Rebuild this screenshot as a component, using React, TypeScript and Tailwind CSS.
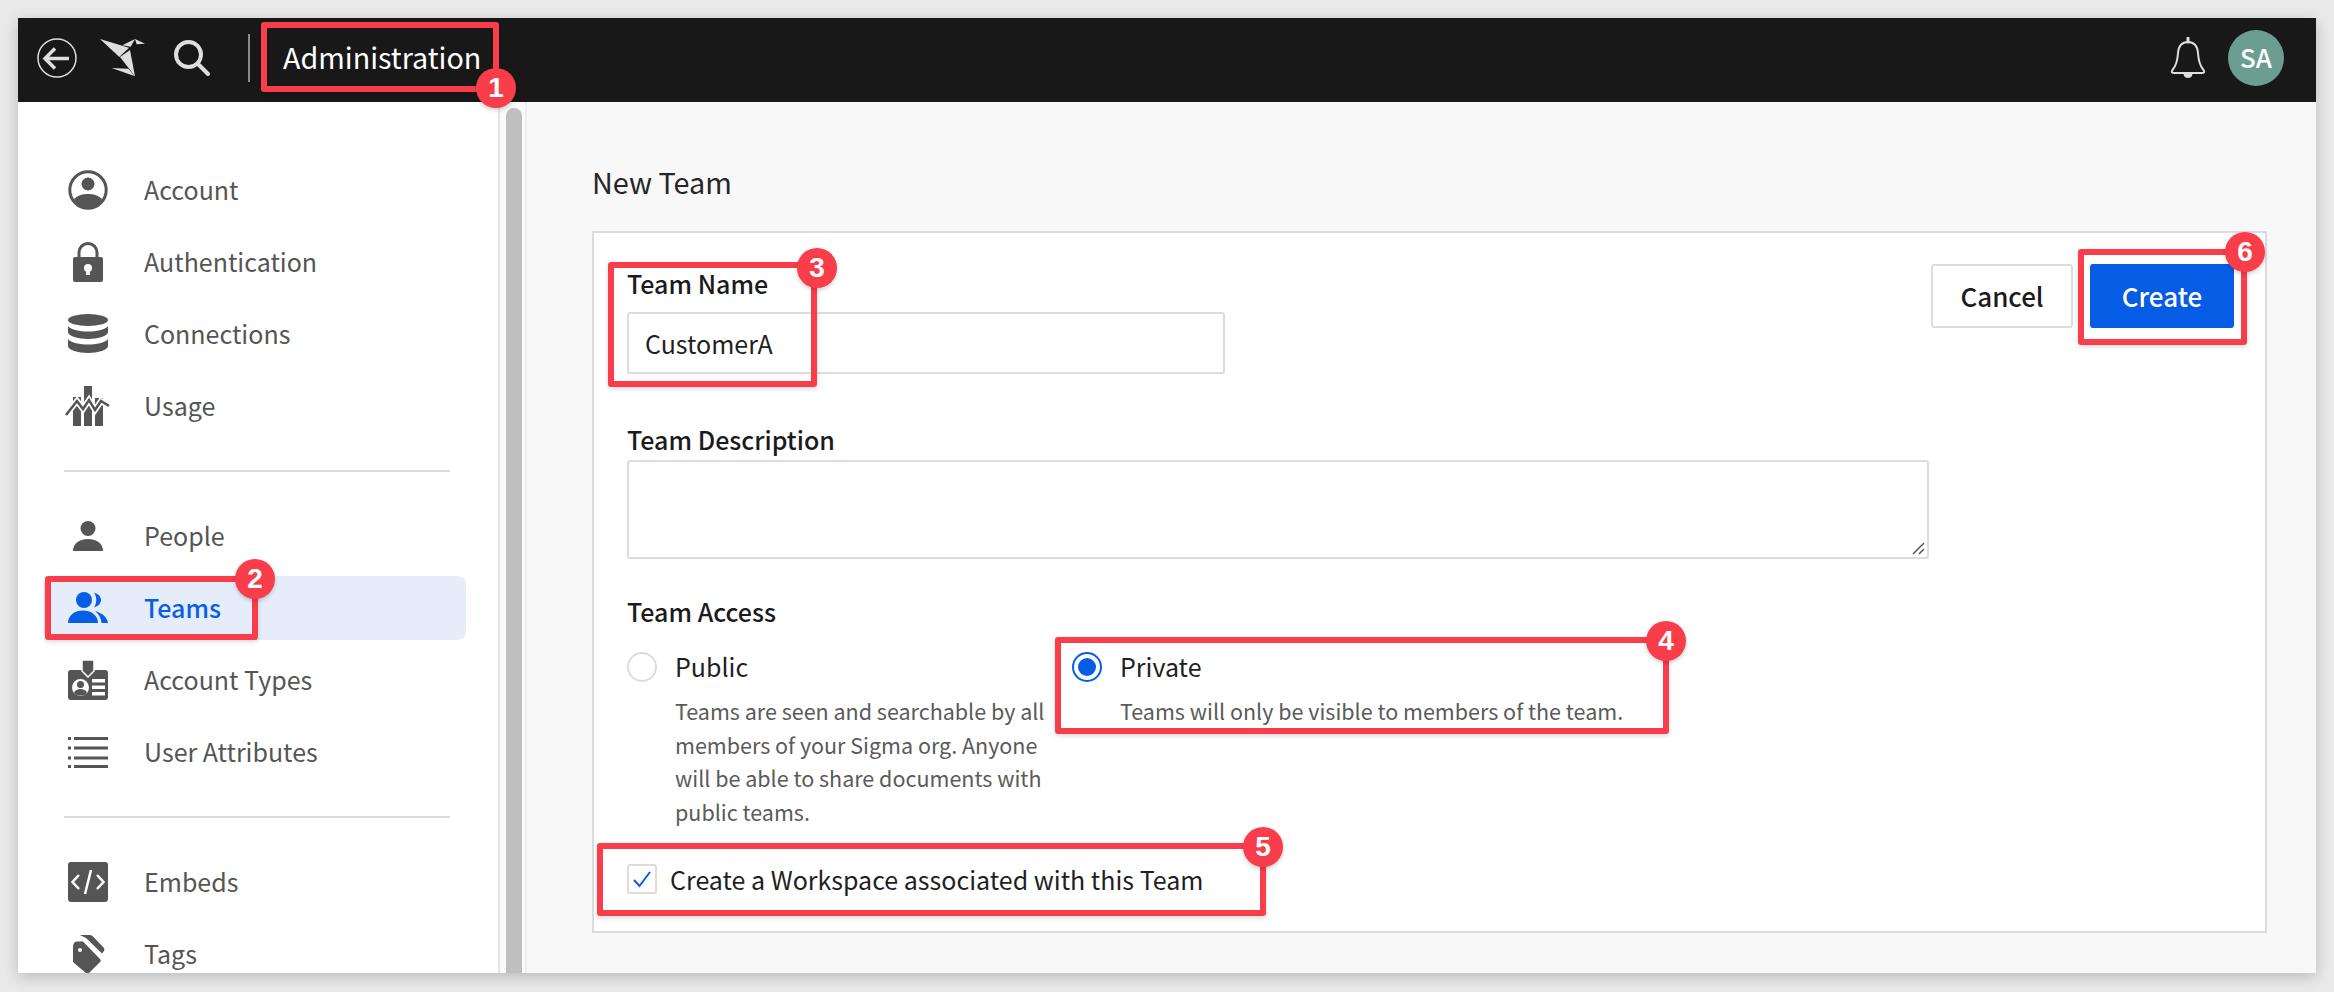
import React from "react";

const sans = { fontFamily: '"Noto Sans CJK SC", "Noto Sans", sans-serif' };

function Ico({ children }: { children: React.ReactNode }) {
  return (
    <svg width="40" height="40" viewBox="0 0 40 40" className="shrink-0 overflow-visible" fill="currentColor">
      {children}
    </svg>
  );
}

const icons: Record<string, React.ReactNode> = {
  Account: (
    <Ico>
      <circle cx="20" cy="20" r="18.2" fill="none" stroke="currentColor" strokeWidth="3" />
      <circle cx="20" cy="14" r="6.5" />
      <path d="M6 29C10 25 15 24 20 24C25 24 30 25 34 29C31 35 26 37 20 37C14 37 9 35 6 29Z" />
    </Ico>
  ),
  Authentication: (
    <Ico>
      <path d="M11 16V10.5a9 9 0 0 1 18 0V16" fill="none" stroke="currentColor" strokeWidth="3" />
      <rect x="5" y="15" width="30" height="25" rx="2" />
      <circle cx="20" cy="26" r="4" fill="#fff" />
      <path d="M18.5 27h3l.5 6h-4z" fill="#fff" />
    </Ico>
  ),
  Connections: (
    <Ico>
      <ellipse cx="20" cy="6" rx="20" ry="6" />
      <path d="M0 12C3 16 12 17.500 20 17.500C28 17.500 37 16 40 12V18C40 22 30 25 20 25C10 25 0 22 0 18Z" />
      <path d="M0 25C3 29 12 30.500 20 30.500C28 30.500 37 29 40 25V32C40 36 30 39 20 39C10 39 0 36 0 32Z" />
    </Ico>
  ),
  Usage: (
    <Ico>
      <rect x="5" y="11" width="8" height="29" />
      <rect x="16" y="0" width="8" height="40" />
      <rect x="27" y="12" width="8" height="28" />
      <path d="M-2 29L9 15L15 23L21 14L27 24L33 15L41 20" fill="none" stroke="#fff" strokeWidth="6" />
      <path d="M-2 29L9 15L15 23L21 14L27 24L33 15L41 20" fill="none" stroke="currentColor" strokeWidth="2.500" />
    </Ico>
  ),
  People: (
    <Ico>
      <circle cx="20" cy="12.500" r="7.500" />
      <path d="M5 35C5 27 12 23 20 23C28 23 35 27 35 35Z" />
    </Ico>
  ),
  Teams: (
    <Ico>
      <circle cx="16" cy="12" r="8" />
      <path d="M26 4.500C31 6 33 9 33 12C33 15 31 18 26 19.500C29 15 29 9 26 4.500Z" />
      <path d="M0 35C0 27 7 22.500 15 22.500C24 22.500 30 28 30 35Z" />
      <path d="M27 23C34 25 39 29 40 35H33.500C33 30 31 26 27 23Z" />
    </Ico>
  ),
  "Account Types": (
    <Ico>
      <rect x="0" y="10" width="40" height="30" rx="3" />
      <path d="M14 0H26V11L20 17L14 11Z" stroke="#fff" strokeWidth="1.500" />
      <circle cx="12.500" cy="27.500" r="8.500" fill="#fff" />
      <circle cx="12.500" cy="24.500" r="3.500" />
      <path d="M6 33C7 30 9.500 29 12.500 29C15.500 29 18 30 19 33C17 35 15 35.500 12.500 35.500C10 35.500 8 35 6 33Z" />
      <rect x="24" y="19" width="13" height="3.500" fill="#fff" />
      <rect x="24" y="25.500" width="13" height="3.500" fill="#fff" />
      <rect x="24" y="32" width="13" height="3.500" fill="#fff" />
    </Ico>
  ),
  "User Attributes": (
    <Ico>
      {[5, 14.500, 24.500, 33].map((y) => (
        <g key={y}>
          <rect x="0" y={y} width="3" height="3" />
          <rect x="6" y={y} width="34" height="3" />
        </g>
      ))}
    </Ico>
  ),
  Embeds: (
    <Ico>
      <rect x="0" y="0" width="40" height="40" rx="3" />
      <path d="M11 13L4.500 20L11 27M29 13L35.500 20L29 27M23 8L17 32" fill="none" stroke="#fff" strokeWidth="2.500" />
    </Ico>
  ),
  Tags: (
    <Ico>
      <path d="M5 12C5 9.500 7 7.500 9 7.500H15L32 25C33 26 33 27 32 28L21 39C20 40 19 40 18 39L6 29C5.500 28.500 5 28 5 27Z" />
      <circle cx="12" cy="16" r="2" fill="#fff" />
      <path d="M12 1H22C23 1 24 1.500 25 2.500L36 14C36.500 15 36.500 16 36 17L34 19.500L18 4Z" />
    </Ico>
  ),
};

function NavRow({ label, active }: { label: string; active?: boolean }) {
  return (
    <div
      className={
        "flex h-[64px] shrink-0 items-center rounded-lg pl-[24px] " +
        (active ? "bg-[#e6edfa] font-medium text-[#075fe6]" : "text-[#555555]")
      }
    >
      {icons[label]}
      <span className="ml-[36px] pb-[3px] text-[25px] leading-[32px]">{label}</span>
    </div>
  );
}

function Divider() {
  return <div className="my-[24px] ml-[20px] h-[2px] w-[386px] shrink-0 bg-[#dcdcdc]" />;
}

function Sidebar() {
  return (
    <div className="flex w-[480px] shrink-0 flex-col gap-[8px] overflow-hidden bg-white pl-[26px] pr-[32px] pt-[56px]">
      <NavRow label="Account" />
      <NavRow label="Authentication" />
      <NavRow label="Connections" />
      <NavRow label="Usage" />
      <Divider />
      <NavRow label="People" />
      <NavRow label="Teams" active />
      <NavRow label="Account Types" />
      <NavRow label="User Attributes" />
      <Divider />
      <NavRow label="Embeds" />
      <NavRow label="Tags" />
    </div>
  );
}

function Header() {
  return (
    <div className="flex h-[84px] shrink-0 items-center bg-[#181818] pb-[4px] text-[#dedede]">
      <svg width="40" height="40" viewBox="0 0 40 40" className="ml-[19px]" fill="none" stroke="currentColor">
        <circle cx="20" cy="20" r="19" strokeWidth="1.500" />
        <path d="M32 20.500H8.500M18 10.500L8 20.500L18 30.500" strokeWidth="3.500" />
      </svg>
      <svg width="45" height="40" viewBox="0 0 135 120" className="ml-[23px]" fill="currentColor">
        <path d="M0 3L87 29L58 57Z" />
        <path d="M67 22L105 3L92 26Z" />
        <path d="M105 3L135 17L110 19Z" />
        <path d="M90 36L105 115L60 57Z" />
        <path d="M35 90L85 92L105 115Z" />
      </svg>
      <svg width="38" height="38" viewBox="0 0 38 38" className="ml-[28px]" fill="none" stroke="currentColor" strokeWidth="4">
        <circle cx="15.500" cy="15.500" r="12.500" />
        <path d="M24.500 24.500L35 35" strokeLinecap="round" />
      </svg>
      <div className="ml-[37px] h-[48px] w-[2px] bg-[#8a8a8a]" />
      <span className="ml-[33px] pb-[2px] text-[28.700px] leading-[40px] text-white">Administration</span>
      <svg width="36" height="42" viewBox="0 0 36 42" className="ml-auto" fill="none" stroke="currentColor" strokeWidth="2">
        <path d="M18 5C11 5 8.500 10 8 16C7.500 24 6 29 2.500 33C1 35 2 36 4 36H32C34 36 35 35 33.500 33C30 29 28.500 24 28 16C27.500 10 25 5 18 5Z" />
        <path d="M18 1V5" strokeWidth="3" strokeLinecap="round" />
        <path d="M14.500 37C15 41 21 41 21.500 37Z" fill="currentColor" />
      </svg>
      <div className="ml-[22px] mr-[32px] flex h-[56px] w-[56px] items-center justify-center rounded-full bg-[#6b9e90] pb-[2px] text-[26px] font-medium leading-none text-white">
        SA
      </div>
    </div>
  );
}

function FieldLabel({ children }: { children: React.ReactNode }) {
  return <div className="pb-[2px] text-[25px] font-medium leading-[30px] text-[#1b1b1b]">{children}</div>;
}

function Form() {
  return (
    <div className="flex-1 bg-[#f8f8f8] pl-[65px] pr-[49px] pt-[63px]">
      <div className="pb-[2px] text-[28.800px] leading-[34px] text-[#262626]">New Team</div>
      <div className="mt-[30px] h-[702px] border-2 border-[#dcdcdc] bg-white pl-[33px] pr-[31px] pt-[31px]">
        <div className="flex items-start justify-between">
          <div className="mt-[4px]">
            <FieldLabel>Team Name</FieldLabel>
            <div className="mt-[12px] flex h-[62px] w-[598px] items-center rounded-[3px] border-2 border-[#dcdcdc] bg-white pl-[16px] text-[25px] leading-[32px] text-[#1f1f1f]">
              CustomerA
            </div>
          </div>
          <div className="flex gap-[17px]">
            <div className="flex h-[64px] w-[142px] items-center justify-center rounded-[3px] border-2 border-[#dcdcdc] bg-white text-[26px] font-medium leading-none text-[#1b1b1b]">
              Cancel
            </div>
            <div className="flex h-[64px] w-[144px] items-center justify-center rounded-[3px] bg-[#075ce5] text-[26px] font-medium leading-none text-white">
              Create
            </div>
          </div>
        </div>
        <div className="mt-[50px]">
          <FieldLabel>Team Description</FieldLabel>
          <div className="relative mt-[4px] h-[99px] w-[1302px] rounded-[3px] border-2 border-[#dcdcdc] bg-white">
            <svg width="14" height="14" viewBox="0 0 14 14" className="absolute bottom-[2px] right-[2px]" stroke="#555" strokeWidth="1.500">
              <path d="M2 13L13 2M8 13L13 8" />
            </svg>
          </div>
        </div>
        <div className="mt-[37px]">
          <FieldLabel>Team Access</FieldLabel>
          <div className="mt-[24px] flex">
            <div className="flex w-[445px] shrink-0 gap-[18px]">
              <div className="h-[30px] w-[30px] shrink-0 rounded-full border-2 border-[#dcdcdc] bg-white" />
              <div className="w-[378px]">
                <div className="pb-[2px] text-[25px] leading-[28px] text-[#1f1f1f]">Public</div>
                <div className="mt-[12px] text-[21.500px] leading-[33.500px] text-[#5a5a5a]">
                  Teams are seen and searchable by all members of your Sigma org. Anyone will be able to share documents with public teams.
                </div>
              </div>
            </div>
            <div className="flex gap-[18px]">
              <div className="flex h-[30px] w-[30px] shrink-0 items-center justify-center rounded-full border-2 border-[#075ce5] bg-white">
                <div className="h-[18px] w-[18px] rounded-full bg-[#075ce5]" />
              </div>
              <div>
                <div className="pb-[2px] text-[25px] leading-[28px] text-[#1f1f1f]">Private</div>
                <div className="mt-[12px] text-[21.500px] leading-[33.500px] text-[#5a5a5a]">
                  Teams will only be visible to members of the team.
                </div>
              </div>
            </div>
          </div>
          <div className="mt-[35px] flex items-center">
            <div className="flex h-[30px] w-[30px] shrink-0 items-center justify-center rounded-[3px] border-2 border-[#dcdcdc] bg-white">
              <svg width="20" height="18" viewBox="0 0 20 18" fill="none" stroke="#075ce5" strokeWidth="2">
                <path d="M2 10L7.500 16L18 2" />
              </svg>
            </div>
            <span className="ml-[13px] text-[25px] leading-[32px] text-[#1f1f1f]">Create a Workspace associated with this Team</span>
          </div>
        </div>
      </div>
    </div>
  );
}

function Badge({ n, className }: { n: number; className: string }) {
  return (
    <div
      className={
        "absolute flex h-[40px] w-[40px] items-center justify-center rounded-full bg-[#f93d4b] text-[28px] font-bold leading-none text-white shadow-[0_2px_4px_rgba(0,0,0,0.2)] " +
        className
      }
      style={{ fontFamily: '"Liberation Sans", Arial, sans-serif' }}
    >
      {n}
    </div>
  );
}

const boxCls = "absolute rounded-[3px] border-[6px] border-[#f93d4b] shadow-[0_2px_5px_rgba(0,0,0,0.15)]";

export default function App() {
  return (
    <div className="relative h-[992px] w-[2334px] overflow-hidden bg-[#e9e9e9]" style={sans}>
      <div className="absolute left-[18px] top-[18px] flex h-[955px] w-[2298px] flex-col overflow-hidden shadow-[0_4px_14px_rgba(0,0,0,0.2)]">
        <Header />
        <div className="flex min-h-0 flex-1">
          <Sidebar />
          <div className="h-full w-[2px] shrink-0 bg-[#e6e6e6]" />
          <div className="h-full w-[25px] shrink-0 bg-[#fafafa] pl-[6px] pt-[6px]">
            <div className="h-[900px] w-[16px] rounded-t-full bg-[#bfbfbf]" />
          </div>
          <div className="h-full w-[2px] shrink-0 bg-[#eeeeee]" />
          <Form />
        </div>
      </div>

      <div className={boxCls + " left-[261px] top-[22px] h-[70px] w-[238px]"} />
      <div className={boxCls + " left-[45px] top-[576px] h-[64px] w-[213px]"} />
      <div className={boxCls + " left-[608px] top-[262px] h-[125px] w-[209px]"} />
      <div className={boxCls + " left-[1055px] top-[637px] h-[97px] w-[614px]"} />
      <div className={boxCls + " left-[597px] top-[843px] h-[73px] w-[669px]"} />
      <div className={boxCls + " left-[2078px] top-[249px] h-[96px] w-[169px]"} />

      <Badge n={1} className="left-[476px] top-[68px]" />
      <Badge n={2} className="left-[235px] top-[559px]" />
      <Badge n={3} className="left-[797px] top-[248px]" />
      <Badge n={4} className="left-[1646px] top-[621px]" />
      <Badge n={5} className="left-[1243px] top-[827px]" />
      <Badge n={6} className="left-[2225px] top-[232px]" />
    </div>
  );
}
